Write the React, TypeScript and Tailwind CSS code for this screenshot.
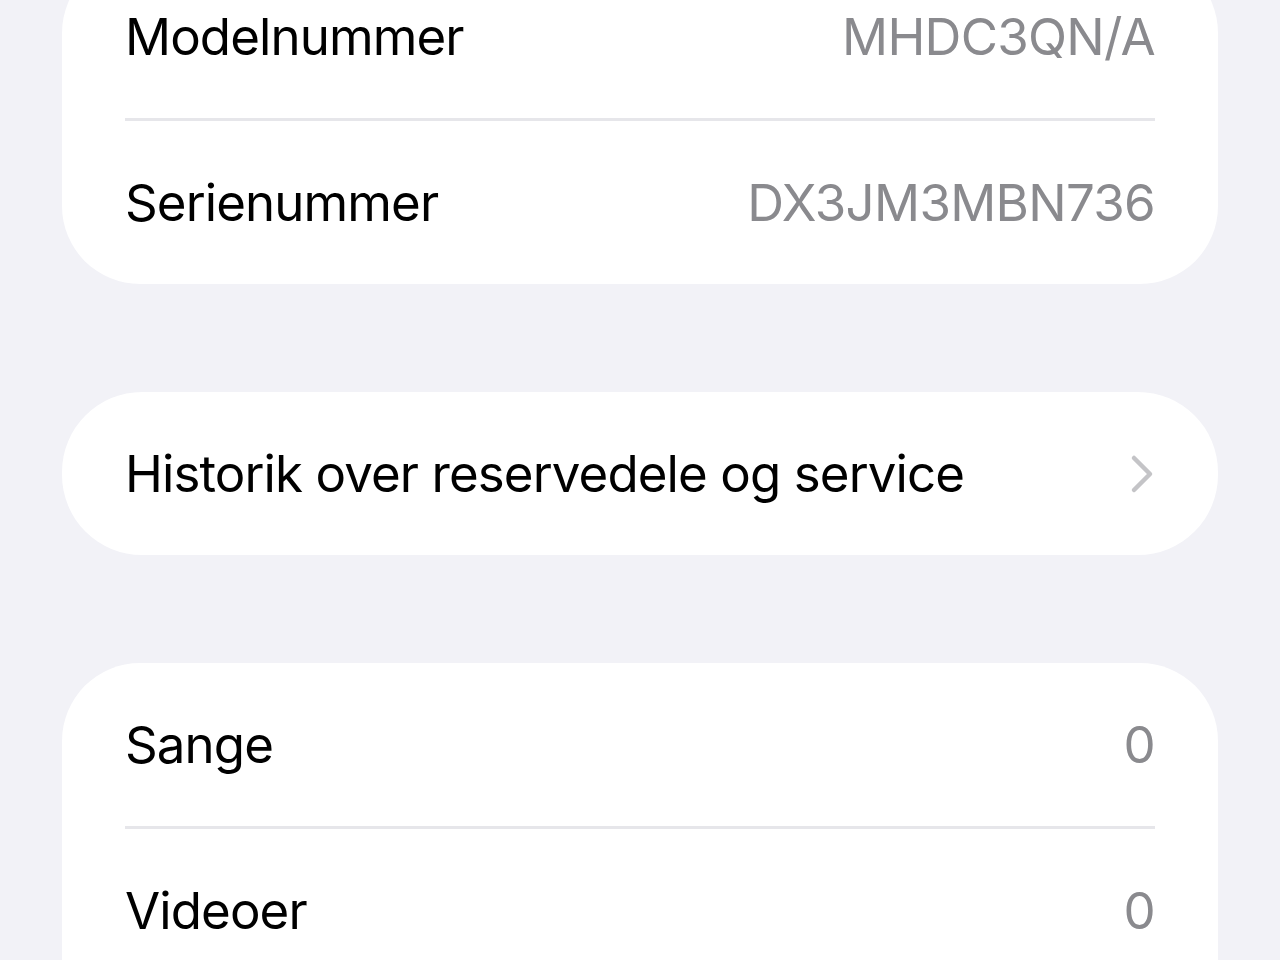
import React from "react";

const font = { fontFamily: "Inter, 'Noto Sans', sans-serif" };

function Row({ label, value, chevron }: { label: string; value?: string; chevron?: boolean }) {
  return (
    <div className="flex h-[163px] items-center justify-between">
      <span className="text-[51px] leading-none tracking-[-0.9px] text-black">{label}</span>
      {value !== undefined && (
        <span className="text-[51px] leading-none tracking-[-0.7px] text-[#8a8a8e]">{value}</span>
      )}
      {chevron && (
        <svg width="24" height="40" viewBox="0 0 24 40" className="mr-[1px]">
          <path d="M4 4 L20 20 L4 36" fill="none" stroke="#c4c4c7" strokeWidth="4.5" strokeLinecap="round" strokeLinejoin="round" />
        </svg>
      )}
    </div>
  );
}

function Sep() {
  return <div className="h-[3px] bg-[#e6e6ea]" />;
}

export default function App() {
  return (
    <div className="h-[960px] w-[1280px] overflow-hidden bg-[#f2f2f7]" style={font}>
      <div className="-mt-[45px] flex flex-col gap-[108px] px-[62px]">
        <div className="rounded-[78px] bg-white px-[63px]">
          <Row label="Modelnummer" value="MHDC3QN/A" />
          <Sep />
          <Row label="Serienummer" value="DX3JM3MBN736" />
        </div>
        <div className="rounded-[80px] bg-white px-[63px]">
          <Row label="Historik over reservedele og service" chevron />
        </div>
        <div className="rounded-[78px] bg-white px-[63px] pb-[120px]">
          <Row label="Sange" value="0" />
          <Sep />
          <Row label="Videoer" value="0" />
          <Sep />
        </div>
      </div>
    </div>
  );
}
